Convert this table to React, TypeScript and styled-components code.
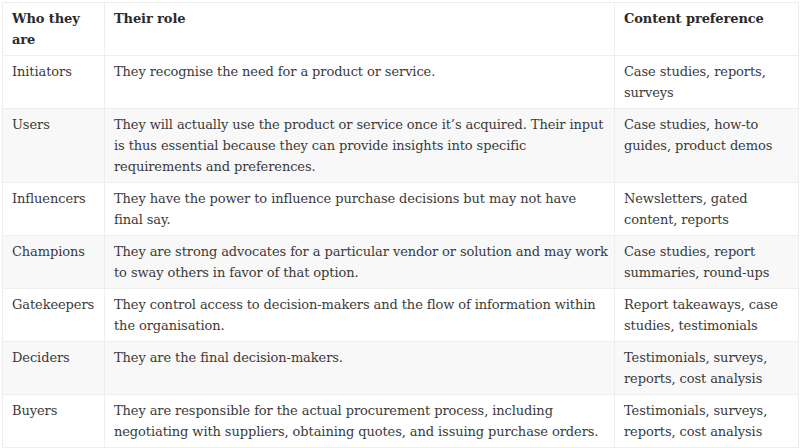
import React from "react";
import styled, { createGlobalStyle } from "styled-components";

const Global = createGlobalStyle`
  html, body { margin: 0; padding: 0; background: #ffffff; }
  body { font-family: "DejaVu Serif", "Liberation Serif", serif; }
`;

const Page = styled.div`
  padding: 2px 2px 0 2px;
`;

const Table = styled.table`
  width: 796px;
  border-collapse: collapse;
  table-layout: fixed;
  font-family: "DejaVu Serif", "Liberation Serif", serif;
  font-size: 13px;
  line-height: 21px;
  letter-spacing: -0.1px;
  color: #3a3a3a;
`;

const Row = styled.tr<{ $striped?: boolean }>`
  background: ${(p) => (p.$striped ? "#f8f8f8" : "#ffffff")};
`;

const HeadCell = styled.th`
  text-align: left;
  vertical-align: top;
  font-weight: 700;
  color: #2a2a2a;
  padding: 5px 2px 5px 9px;
  border: 1px solid #eeeeee;
`;

const Cell = styled.td<{ $tight?: boolean }>`
  vertical-align: top;
  padding: 5px ${(p) => (p.$tight ? "6px" : "2px")} 5px 9px;
  border: 1px solid #eeeeee;
`;

type Item = { who: string; role: string; pref: string };

const rows: Item[] = [
  { who: "Initiators", role: "They recognise the need for a product or service.", pref: "Case studies, reports, surveys" },
  { who: "Users", role: "They will actually use the product or service once it\u2019s acquired. Their input is thus essential because they can provide insights into specific requirements and preferences.", pref: "Case studies, how-to guides, product demos" },
  { who: "Influencers", role: "They have the power to influence purchase decisions but may not have final say.", pref: "Newsletters, gated content, reports" },
  { who: "Champions", role: "They are strong advocates for a particular vendor or solution and may work to sway others in favor of that option.", pref: "Case studies, report summaries, round-ups" },
  { who: "Gatekeepers", role: "They control access to decision-makers and the flow of information within the organisation.", pref: "Report takeaways, case studies, testimonials" },
  { who: "Deciders", role: "They are the final decision-makers.", pref: "Testimonials, surveys, reports, cost analysis" },
  { who: "Buyers", role: "They are responsible for the actual procurement process, including negotiating with suppliers, obtaining quotes, and issuing purchase orders.", pref: "Testimonials, surveys, reports, cost analysis" },
];

export default function App() {
  return (
    <Page>
      <Global />
      <Table>
        <colgroup>
          <col style={{ width: 102 }} />
          <col style={{ width: 510 }} />
          <col style={{ width: 184 }} />
        </colgroup>
        <thead>
          <Row>
            <HeadCell>Who they are</HeadCell>
            <HeadCell>Their role</HeadCell>
            <HeadCell>Content preference</HeadCell>
          </Row>
        </thead>
        <tbody>
          {rows.map((r, i) => (
            <Row key={r.who} $striped={i % 2 === 1}>
              <Cell>{r.who}</Cell>
              <Cell $tight>{r.role}</Cell>
              <Cell>{r.pref}</Cell>
            </Row>
          ))}
        </tbody>
      </Table>
    </Page>
  );
}
